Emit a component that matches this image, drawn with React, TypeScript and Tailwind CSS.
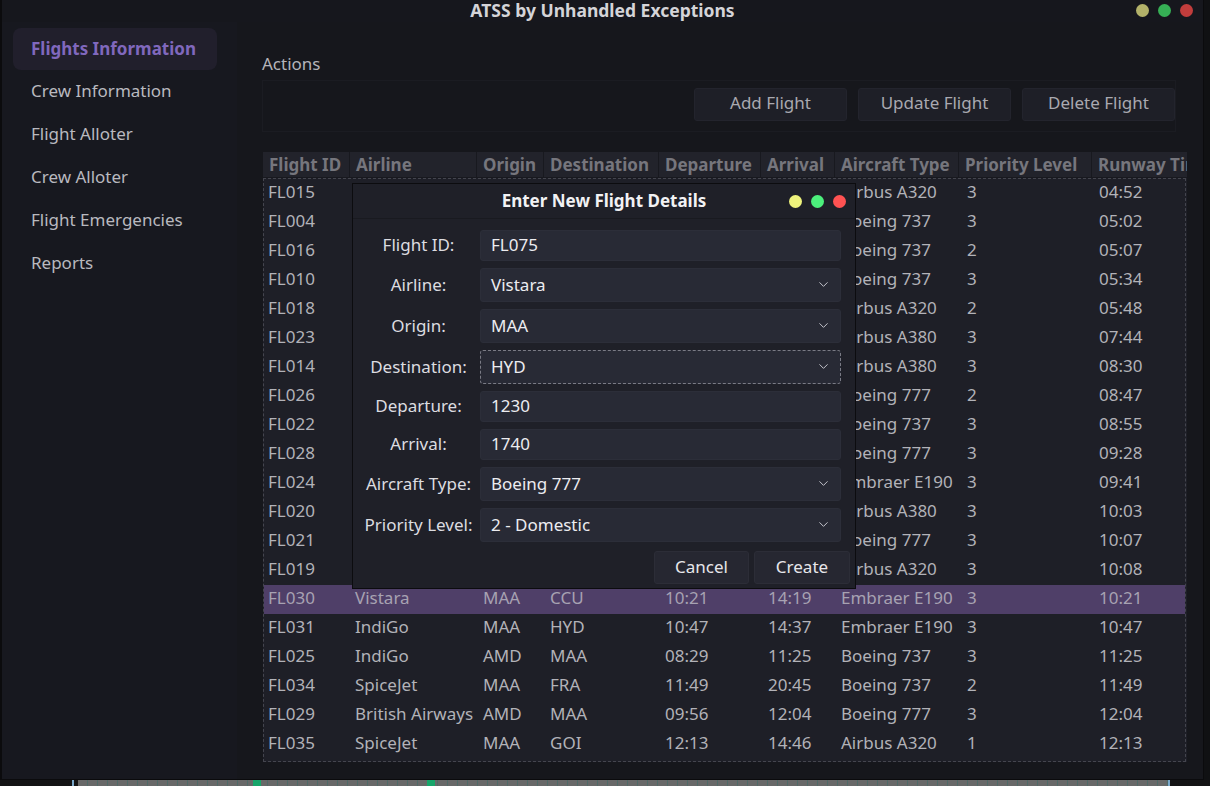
import { ChevronDown } from 'lucide-react';

type Row = {
  id: string;
  airline: string;
  origin: string;
  dest: string;
  dep: string;
  arr: string;
  aircraft: string;
  priority: string;
  runway: string;
};

// rows hidden behind the dialog only show what peeks out around it
const rows: Row[] = [
  { id: 'FL015', airline: '', origin: '', dest: '', dep: '', arr: '', aircraft: 'Airbus A320', priority: '3', runway: '04:52' },
  { id: 'FL004', airline: '', origin: '', dest: '', dep: '', arr: '', aircraft: 'Boeing 737', priority: '3', runway: '05:02' },
  { id: 'FL016', airline: '', origin: '', dest: '', dep: '', arr: '', aircraft: 'Boeing 737', priority: '2', runway: '05:07' },
  { id: 'FL010', airline: '', origin: '', dest: '', dep: '', arr: '', aircraft: 'Boeing 737', priority: '3', runway: '05:34' },
  { id: 'FL018', airline: '', origin: '', dest: '', dep: '', arr: '', aircraft: 'Airbus A320', priority: '2', runway: '05:48' },
  { id: 'FL023', airline: '', origin: '', dest: '', dep: '', arr: '', aircraft: 'Airbus A380', priority: '3', runway: '07:44' },
  { id: 'FL014', airline: '', origin: '', dest: '', dep: '', arr: '', aircraft: 'Airbus A380', priority: '3', runway: '08:30' },
  { id: 'FL026', airline: '', origin: '', dest: '', dep: '', arr: '', aircraft: 'Boeing 777', priority: '2', runway: '08:47' },
  { id: 'FL022', airline: '', origin: '', dest: '', dep: '', arr: '', aircraft: 'Boeing 737', priority: '3', runway: '08:55' },
  { id: 'FL028', airline: '', origin: '', dest: '', dep: '', arr: '', aircraft: 'Boeing 777', priority: '3', runway: '09:28' },
  { id: 'FL024', airline: '', origin: '', dest: '', dep: '', arr: '', aircraft: 'Embraer E190', priority: '3', runway: '09:41' },
  { id: 'FL020', airline: '', origin: '', dest: '', dep: '', arr: '', aircraft: 'Airbus A380', priority: '3', runway: '10:03' },
  { id: 'FL021', airline: '', origin: '', dest: '', dep: '', arr: '', aircraft: 'Boeing 777', priority: '3', runway: '10:07' },
  { id: 'FL019', airline: '', origin: '', dest: '', dep: '', arr: '', aircraft: 'Airbus A320', priority: '3', runway: '10:08' },
  { id: 'FL030', airline: 'Vistara', origin: 'MAA', dest: 'CCU', dep: '10:21', arr: '14:19', aircraft: 'Embraer E190', priority: '3', runway: '10:21' },
  { id: 'FL031', airline: 'IndiGo', origin: 'MAA', dest: 'HYD', dep: '10:47', arr: '14:37', aircraft: 'Embraer E190', priority: '3', runway: '10:47' },
  { id: 'FL025', airline: 'IndiGo', origin: 'AMD', dest: 'MAA', dep: '08:29', arr: '11:25', aircraft: 'Boeing 737', priority: '3', runway: '11:25' },
  { id: 'FL034', airline: 'SpiceJet', origin: 'MAA', dest: 'FRA', dep: '11:49', arr: '20:45', aircraft: 'Boeing 737', priority: '2', runway: '11:49' },
  { id: 'FL029', airline: 'British Airways', origin: 'AMD', dest: 'MAA', dep: '09:56', arr: '12:04', aircraft: 'Boeing 777', priority: '3', runway: '12:04' },
  { id: 'FL035', airline: 'SpiceJet', origin: 'MAA', dest: 'GOI', dep: '12:13', arr: '14:46', aircraft: 'Airbus A320', priority: '1', runway: '12:13' },
];

const headers = [
  { label: 'Flight ID', w: 'w-[87px]' },
  { label: 'Airline', w: 'w-[127px]' },
  { label: 'Origin', w: 'w-[67px]' },
  { label: 'Destination', w: 'w-[115px]' },
  { label: 'Departure', w: 'w-[102px]' },
  { label: 'Arrival', w: 'w-[74px]' },
  { label: 'Aircraft Type', w: 'w-[124px]' },
  { label: 'Priority Level', w: 'w-[133px]' },
  { label: 'Runway Time', w: 'w-[110px]' },
];

const navItems = ['Flights Information', 'Crew Information', 'Flight Alloter', 'Crew Alloter', 'Flight Emergencies', 'Reports'];

function Lights({ dim }: { dim?: boolean }) {
  return (
    <div className="flex items-center gap-[9px]">
      <span className={`w-[13px] h-[13px] rounded-full ${dim ? 'bg-[#b3b26a]' : 'bg-[#eef27c]'}`} />
      <span className={`w-[13px] h-[13px] rounded-full ${dim ? 'bg-[#36b055]' : 'bg-[#4cf07c]'}`} />
      <span className={`w-[13px] h-[13px] rounded-full ${dim ? 'bg-[#c23d3c]' : 'bg-[#ff5252]'}`} />
    </div>
  );
}

function Field({ label, value, select, focus, tall }: { label: string; value: string; select?: boolean; focus?: boolean; tall?: boolean }) {
  return (
    <div className="flex items-center">
      <div className="w-[111px] text-center text-[#dcdce0] pb-[1px]">{label}</div>
      <div
        className={`ml-[6px] w-[361px] flex items-center justify-between pl-[10px] pr-[9px] pb-[1px] rounded-[3px] bg-[#282a35] text-[#ececf0] ${
          tall ? 'h-[34px]' : 'h-[31px]'
        } ${focus ? 'border border-dashed border-[#7a7b85]' : 'border border-[#2c2e39]'}`}
      >
        <span>{value}</span>
        {select && <ChevronDown size={15} strokeWidth={1.6} className="text-[#c4c4cc]" />}
      </div>
    </div>
  );
}

export default function App() {
  return (
    <div className="relative w-[1210px] h-[786px] bg-[#101113] overflow-hidden text-[17px] font-['Noto_Sans',sans-serif]">
      {/* main window */}
      <div className="w-[1204px] h-[780px] border-l-2 border-r border-b border-[#0b0b0d] bg-[#16171d] flex flex-col">
        <div className="relative h-[22px] flex items-start justify-center">
          <span className="font-bold text-[17.5px] text-[#d4d4d8] leading-[20px]">ATSS by Unhandled Exceptions</span>
          <div className="absolute right-[10px] top-[4px]">
            <Lights dim />
          </div>
        </div>

        <div className="flex flex-1 min-h-0">
          {/* sidebar */}
          <div className="w-[235px] bg-[#17181f] pt-[6px] px-[11px] flex flex-col">
            {navItems.map((item, i) => (
              <div
                key={item}
                className={`w-[204px] flex items-center pl-[18px] rounded-lg ${
                  i === 0 ? 'h-[42px] bg-[#211f2c] text-[#8068bd] font-bold' : 'h-[43px] pb-[1px] text-[#b9b9bf]'
                }`}
              >
                {item}
              </div>
            ))}
          </div>

          {/* content */}
          <div className="relative flex-1 pl-[25px] pr-[16px] pt-[29px] bg-[#16171c]">
            <div className="text-[#b4b4ba] leading-[26px]">Actions</div>
            <div className="mt-[3px] h-[52px] w-[914px] border border-[#1b1c22] flex items-start pt-[7px] justify-end gap-[11px]">
              {['Add Flight', 'Update Flight', 'Delete Flight'].map((b) => (
                <div
                  key={b}
                  className="w-[153px] h-[33px] pb-[3px] flex items-center justify-center rounded-[3px] bg-[#1e1f27] border border-[#23242d] text-[#a9a9b0]"
                >
                  {b}
                </div>
              ))}
            </div>

            {/* table */}
            <div className="mt-[20px] ml-[1px] w-[924px] h-[610px] bg-[#1e1f27] overflow-hidden flex flex-col">
              <div className="flex h-[26px] bg-[#22232b] shrink-0">
                {headers.map((h) => (
                  <div
                    key={h.label}
                    className={`${h.w} shrink-0 pl-[6px] flex items-center font-bold text-[#76767d] border-r border-b border-[#18191f] whitespace-nowrap overflow-hidden`}
                  >
                    {h.label}
                  </div>
                ))}
              </div>
              <div className="flex-1 border border-dashed border-[#44454e] mr-[1px]">
                {rows.map((r) => (
                  <div
                    key={r.id}
                    className={`flex h-[29px] pb-[3px] items-center whitespace-nowrap ${
                      r.id === 'FL030' ? 'bg-[#4f3f68] text-[#a7a2b2]' : 'text-[#b2b2b8]'
                    }`}
                  >
                    <div className="w-[87px] shrink-0 pl-[4px]">{r.id}</div>
                    <div className="w-[127px] shrink-0 pl-[4px]">{r.airline}</div>
                    <div className="w-[67px] shrink-0 pl-[5px]">{r.origin}</div>
                    <div className="w-[115px] shrink-0 pl-[5px]">{r.dest}</div>
                    <div className="w-[102px] shrink-0 pl-[5px]">{r.dep}</div>
                    <div className="w-[74px] shrink-0 pl-[6px]">{r.arr}</div>
                    <div className="w-[124px] shrink-0 pl-[5px]">{r.aircraft}</div>
                    <div className="w-[133px] shrink-0 pl-[7px]">{r.priority}</div>
                    <div className="w-[95px] shrink-0 pl-[6px]">{r.runway}</div>
                  </div>
                ))}
              </div>
            </div>
          </div>
        </div>
      </div>

      {/* strip of desktop below the window */}
      <div className="absolute left-0 bottom-0 w-[1210px] h-[6px] flex">
        <div className="w-[72px] bg-[#141415]" />
        <div className="w-[2px] bg-[#7aa7c9]" />
        <div className="w-[4px] bg-[#141415]" />
        <div className="w-[1090px] bg-[repeating-linear-gradient(90deg,#686868_0px,#686868_9px,#4e6a68_9px,#4e6a68_10px)] relative">
          <span className="absolute left-[175px] top-0 w-[8px] h-[6px] bg-[#17a56a]" />
          <span className="absolute left-[349px] top-0 w-[8px] h-[6px] bg-[#17a56a]" />
        </div>
        <div className="w-[2px] bg-[#7aa7c9]" />
        <div className="flex-1 bg-[#141415]" />
      </div>

      {/* dialog */}
      <div className="absolute left-[352px] top-[183px] w-[504px] h-[406px] bg-[#1f2028] border border-[#0c0c0f] flex flex-col">
        <div className="relative h-[35px] flex items-center justify-center border-b border-[#191a20]">
          <span className="font-bold text-[#f2f2f4] pb-[1px]">Enter New Flight Details</span>
          <div className="absolute right-[9px] top-[11px]">
            <Lights />
          </div>
        </div>
        <div className="pt-[11px] pl-[10px] flex flex-col gap-[7px]">
          <Field label="Flight ID:" value="FL075" />
          <Field label="Airline:" value="Vistara" select tall />
          <Field label="Origin:" value="MAA" select tall />
          <Field label="Destination:" value="HYD" select tall focus />
          <Field label="Departure:" value="1230" />
          <Field label="Arrival:" value="1740" />
          <Field label="Aircraft Type:" value="Boeing 777" select tall />
          <Field label="Priority Level:" value="2 - Domestic" select tall />
        </div>
        <div className="mt-[9px] pr-[5px] flex justify-end gap-[5px]">
          <div className="w-[95px] h-[33px] pb-[1px] flex items-center justify-center rounded-[3px] bg-[#262731] border border-[#2c2d37] text-[#e6e6ea]">Cancel</div>
          <div className="w-[96px] h-[33px] pb-[1px] flex items-center justify-center rounded-[3px] bg-[#262731] border border-[#2c2d37] text-[#e6e6ea]">Create</div>
        </div>
      </div>
    </div>
  );
}
